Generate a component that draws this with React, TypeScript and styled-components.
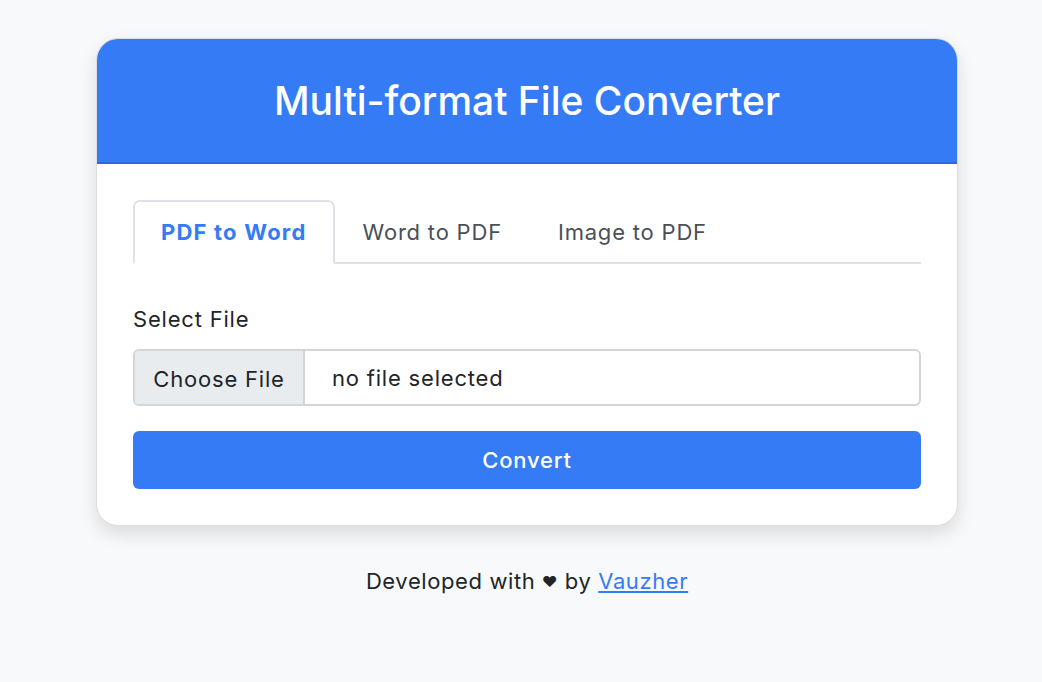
import React from "react";
import styled, { createGlobalStyle } from "styled-components";

const Global = createGlobalStyle`
  html, body { margin: 0; padding: 0; background: #f8f9fa; }
  body { font-family: Inter, "Noto Sans", sans-serif; color: #212529; }
  * { box-sizing: border-box; }
`;

const Page = styled.div`
  display: flex;
  flex-direction: column;
  align-items: center;
  padding: 38px 0 0 12px;
  min-height: 682px;
`;

const Card = styled.div`
  width: 862px;
  background: #fff;
  border: 1px solid #dcdde0;
  border-radius: 22px;
  overflow: hidden;
  box-shadow: 0 8px 18px rgba(0, 0, 0, 0.12);
`;

const Header = styled.div`
  height: 125px;
  background: #367bf6;
  border-bottom: 2px solid #2e6bd8;
  display: flex;
  align-items: center;
  justify-content: center;
`;

const Title = styled.h1`
  margin: 0;
  color: #fff;
  font-size: 39px;
  font-weight: 500;
  letter-spacing: 0;
`;

const Body = styled.div`
  padding: 36px 36px 36px;
  letter-spacing: 0.8px;
`;

const Tabs = styled.div`
  display: flex;
  border-bottom: 2px solid #dee2e6;
  margin-bottom: 42px;
`;

const Tab = styled.div<{ $active?: boolean }>`
  height: 64px;
  padding: 0 26px;
  display: flex;
  align-items: center;
  font-size: 22px;
  margin-bottom: -2px;
  border: 2px solid ${(p) => (p.$active ? "#dee2e6" : "transparent")};
  border-bottom-color: ${(p) => (p.$active ? "#fff" : "transparent")};
  border-radius: 7px 7px 0 0;
  color: ${(p) => (p.$active ? "#367bf6" : "#495057")};
  font-weight: ${(p) => (p.$active ? 700 : 400)};
  letter-spacing: ${(p) => (p.$active ? "1.2px" : "0.8px")};
  background: ${(p) => (p.$active ? "#fff" : "transparent")};
`;

const Label = styled.div`
  font-size: 22px;
  margin-bottom: 17px;
  line-height: 26px;
`;

const FileInput = styled.div`
  display: flex;
  height: 57px;
  border: 2px solid #d3d6d9;
  border-radius: 6px;
  overflow: hidden;
  margin-bottom: 25px;
`;

const ChooseButton = styled.div`
  width: 170px;
  background: #e9ecef;
  border-right: 2px solid #d3d6d9;
  display: flex;
  align-items: center;
  justify-content: center;
  font-size: 22px;
  padding-top: 2px;
`;

const FileName = styled.div`
  display: flex;
  align-items: center;
  padding-left: 27px;
  font-size: 22px;
`;

const ConvertButton = styled.button`
  width: 100%;
  height: 58px;
  border: none;
  border-radius: 6px;
  background: #367bf6;
  color: #fff;
  font-family: inherit;
  font-size: 22px;
  font-weight: 500;
  letter-spacing: 0.8px;
`;

const Footer = styled.div`
  margin-top: 42px;
  font-size: 22px;
  letter-spacing: 0.6px;
  color: #212529;
`;

const Heart = styled.span`
  font-size: 15px;
  vertical-align: 2px;
`;

const Link = styled.a`
  color: #367bf6;
  text-decoration: underline;
`;

export default function App() {
  return (
    <>
      <Global />
      <Page>
        <Card>
          <Header>
            <Title>Multi-format File Converter</Title>
          </Header>
          <Body>
            <Tabs>
              <Tab $active>PDF to Word</Tab>
              <Tab>Word to PDF</Tab>
              <Tab>Image to PDF</Tab>
            </Tabs>
            <Label>Select File</Label>
            <FileInput>
              <ChooseButton>Choose File</ChooseButton>
              <FileName>no file selected</FileName>
            </FileInput>
            <ConvertButton>Convert</ConvertButton>
          </Body>
        </Card>
        <Footer>
          Developed with <Heart>❤</Heart> by <Link href="#">Vauzher</Link>
        </Footer>
      </Page>
    </>
  );
}
